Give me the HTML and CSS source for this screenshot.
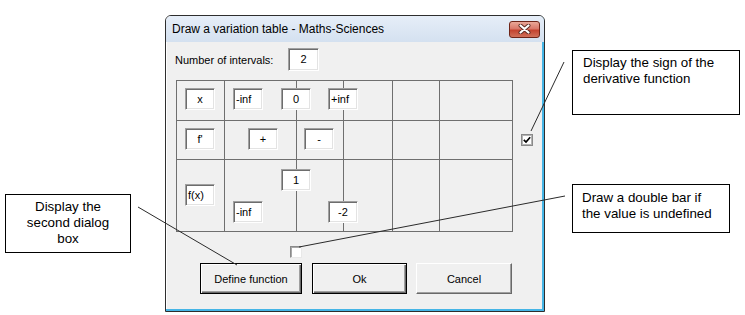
FILE: index.html
```html
<!DOCTYPE html>
<html lang="en">
<head>
    <meta charset="UTF-8">
    <meta name="viewport" content="width=device-width, initial-scale=1.0">
    <title>Draw a variation table - Maths-Sciences</title>
    <link rel="stylesheet" href="styles.css">
</head>
<body>
    <div class="page">
        <div class="dialog">
            <div class="titlebar">
                <span class="title">Draw a variation table - Maths-Sciences</span>
                <div class="close">
                    <svg width="13" height="10" viewBox="0 0 13 10">
                        <path d="M2.5 1.5 L10.5 8.5 M10.5 1.5 L2.5 8.5" stroke="#5a2a22" stroke-width="4" stroke-linecap="round"/>
                        <path d="M2.5 1.5 L10.5 8.5 M10.5 1.5 L2.5 8.5" stroke="#fff" stroke-width="2.2" stroke-linecap="round"/>
                    </svg>
                </div>
            </div>

            <div class="body">
                <div class="intervals">
                    <span class="intervals-label">Number of intervals:</span>
                    <div class="intervals-input">2</div>
                </div>

                <div class="grid-area">
                    <div class="var-grid">
                        <!-- x row -->
                        <div class="cell"><div class="field">x</div></div>
                        <div class="cell"><div class="field field--left">-inf</div></div>
                        <div class="cell"><div class="field field--split">0</div></div>
                        <div class="cell"><div class="field field--split field--left">+inf</div></div>
                        <div class="cell"></div>
                        <div class="cell"></div>
                        <!-- f' row -->
                        <div class="cell"><div class="field">f'</div></div>
                        <div class="cell"><div class="field field--center">+</div></div>
                        <div class="cell"><div class="field field--mid">-</div></div>
                        <div class="cell"></div>
                        <div class="cell"></div>
                        <div class="cell"></div>
                        <!-- f(x) row -->
                        <div class="cell"><div class="field field--fx field--left">f(x)</div></div>
                        <div class="cell"><div class="field field--low field--left">-inf</div></div>
                        <div class="cell"><div class="field field--split field--high">1</div></div>
                        <div class="cell"><div class="field field--split field--low">-2</div></div>
                        <div class="cell"></div>
                        <div class="cell"></div>
                    </div>
                    <div class="checkbox checkbox--on">
                        <svg width="8" height="8" viewBox="0 0 8 8">
                            <path d="M0.8 3.8 L3 6 L7.2 1.2" stroke="#000" stroke-width="1.7" fill="none"/>
                        </svg>
                    </div>
                </div>

                <div class="checkbox checkbox--bar"></div>

                <div class="actions">
                    <div class="btn btn--default btn--define">Define function</div>
                    <div class="btn btn--default btn--ok">Ok</div>
                    <div class="btn btn--cancel">Cancel</div>
                </div>
            </div>
        </div>

        <div class="callout callout--dialog">Display the<br>second dialog<br>box</div>
        <div class="callout callout--sign">Display the sign of the<br>derivative function</div>
        <div class="callout callout--bar">Draw a double bar if<br>the value is undefined</div>

        <svg class="leaders" width="745" height="315" viewBox="0 0 745 315">
            <line x1="138" y1="207" x2="237" y2="265"/>
            <line x1="564" y1="62" x2="531" y2="131"/>
            <line x1="565" y1="196" x2="299" y2="247"/>
        </svg>
    </div>
</body>
</html>
```

FILE: styles.css
```css
body {
    margin: 0;
    background-color: #fff;
    font-family: "Liberation Sans", Arial, sans-serif;
    color: #000;
}

.page {
    position: relative;
    width: 745px;
    height: 315px;
    padding: 15px 0 0 165px;
    box-sizing: border-box;
    overflow: hidden;
}

/* window frame */
.dialog {
    width: 380px;
    height: 297px;
    box-sizing: border-box;
    border: 1px solid #2e2e2e;
    border-radius: 6px 6px 0 0;
    background-color: #f0f0f0;
    box-shadow: inset -2px -2px 0 #45b5e6, inset 1px 0 0 #fff;
    display: flex;
    flex-direction: column;
    overflow: hidden;
}

.titlebar {
    height: 26px;
    flex-shrink: 0;
    display: flex;
    align-items: center;
    justify-content: space-between;
    padding: 0 4px 0 6px;
    background: linear-gradient(#e6eef8, #d4e1f0);
    font-size: 12px;
}

.close {
    width: 31px;
    height: 17px;
    box-sizing: border-box;
    border: 1px solid #6e2418;
    border-radius: 3px;
    background: linear-gradient(#eaa898, #d9786a 45%, #c4432f 55%, #d0705a);
    display: flex;
    align-items: center;
    justify-content: center;
}

.body {
    padding: 6px 0 0 10px;
    font-size: 11px;
}

.intervals {
    display: flex;
    align-items: center;
    height: 23px;
}

.intervals-label {
    width: 112px;
    margin-left: -1px;
    padding-right: 1px;
}

.intervals-input,
.field {
    box-sizing: border-box;
    background-color: #fff;
    border: 1px solid;
    border-color: #a0a0a0 #fff #fff #a0a0a0;
    box-shadow: inset 1px 1px 0 #6d6d6d, inset -1px -1px 0 #e3e3e3;
    text-align: center;
}

.intervals-input {
    width: 31px;
    height: 23px;
    line-height: 21px;
}

/* variation table */
.grid-area {
    display: flex;
    align-items: flex-start;
    margin-top: 9px;
}

.var-grid {
    display: grid;
    grid-template-columns: 48px 72px 47px 49px 47px 73px;
    grid-template-rows: 40px 39px 72px;
    border-left: 1px solid #6f6f6f;
    border-top: 1px solid #6f6f6f;
}

.cell {
    border-right: 1px solid #6f6f6f;
    border-bottom: 1px solid #6f6f6f;
}

.field {
    width: 30px;
    height: 22px;
    margin: 7px 0 0 8px;
    line-height: 20px;
}

.field--left {
    text-align: left;
    padding-left: 2px;
}

.field--split {
    margin-left: -16px;
}

.field--center {
    margin-left: 23px;
}

.field--mid {
    margin-left: 7px;
}

.field--fx {
    margin-top: 24px;
}

.field--high {
    margin-top: 9px;
}

.field--low {
    margin-top: 41px;
}

.checkbox {
    width: 12px;
    height: 12px;
    box-sizing: border-box;
    background-color: #fff;
    border: 1px solid;
    border-color: #8a8a8a #e8e8e8 #e8e8e8 #8a8a8a;
    box-shadow: inset 1px 1px 0 #a8a8a8;
    display: flex;
    align-items: center;
    justify-content: center;
}

.checkbox--on {
    margin: 54px 0 0 8px;
    border-color: #8a8a8a;
    box-shadow: inset 0 0 0 1px #b4b4b4;
}

.checkbox--bar {
    margin: 14px 0 0 114px;
}

/* buttons */
.actions {
    display: flex;
    margin: 5px 0 0 24px;
}

.btn {
    height: 31px;
    box-sizing: border-box;
    background-color: #f0f0f0;
    display: flex;
    align-items: center;
    justify-content: center;
}

.btn--default {
    border: 1px solid #000;
    box-shadow: inset 1px 1px 0 #fff, inset -1px -1px 0 #696969, inset -2px -2px 0 #a0a0a0;
}

.btn--define {
    width: 102px;
}

.btn--ok {
    width: 95px;
    margin-left: 10px;
}

.btn--cancel {
    width: 96px;
    margin-left: 9px;
    border: 1px solid;
    border-color: #fff #696969 #696969 #fff;
    box-shadow: inset -1px -1px 0 #a0a0a0;
}

/* annotations */
.callout {
    position: absolute;
    box-sizing: border-box;
    background-color: #fff;
    border: 1px solid #000;
    font-size: 13.33px;
    line-height: 16px;
}

.callout--dialog {
    left: 5px;
    top: 194px;
    width: 126px;
    height: 59px;
    padding-top: 4px;
    text-align: center;
}

.callout--sign {
    left: 572px;
    top: 50px;
    width: 168px;
    height: 65px;
    padding: 4px 0 0 10px;
}

.callout--bar {
    left: 572px;
    top: 184px;
    width: 158px;
    height: 49px;
    padding: 5px 0 0 9px;
}

.leaders {
    position: absolute;
    left: 0;
    top: 0;
    pointer-events: none;
}

.leaders line {
    stroke: #2a2a2a;
    stroke-width: 1;
}
```
